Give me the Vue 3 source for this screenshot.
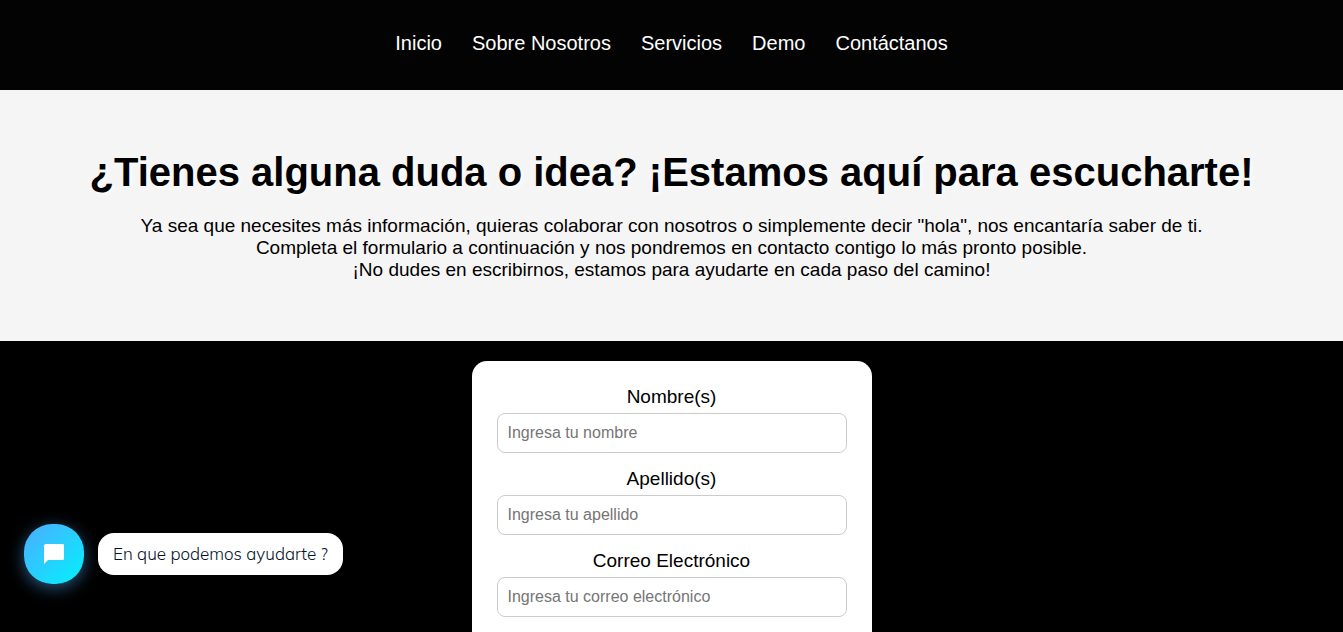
<script setup>
const links = ['Inicio', 'Sobre Nosotros', 'Servicios', 'Demo', 'Contáctanos']
const fields = [
  { id: 'nombre', label: 'Nombre(s)', type: 'text', placeholder: 'Ingresa tu nombre' },
  { id: 'apellido', label: 'Apellido(s)', type: 'text', placeholder: 'Ingresa tu apellido' },
  { id: 'correo', label: 'Correo Electrónico', type: 'email', placeholder: 'Ingresa tu correo electrónico' },
]
</script>

<template>
  <div class="page">
    <nav class="nav">
      <a v-for="link in links" :key="link" href="#">{{ link }}</a>
    </nav>
    <header class="intro">
      <h1>¿Tienes alguna duda o idea? ¡Estamos aquí para escucharte!</h1>
      <p>
        Ya sea que necesites más información, quieras colaborar con nosotros o simplemente decir "hola", nos encantaría saber de ti.<br />
        Completa el formulario a continuación y nos pondremos en contacto contigo lo más pronto posible.<br />
        ¡No dudes en escribirnos, estamos para ayudarte en cada paso del camino!
      </p>
    </header>
    <main class="contact">
      <form class="card" @submit.prevent>
        <div v-for="field in fields" :key="field.id" class="field">
          <label :for="field.id">{{ field.label }}</label>
          <input :id="field.id" :type="field.type" :placeholder="field.placeholder" />
        </div>
      </form>
    </main>
    <div class="chat">
      <button class="chat-button" type="button" aria-label="Abrir chat">
        <svg viewBox="0 0 24 24" width="24" height="24" aria-hidden="true">
          <path fill="#fff" d="M4 2h16.500c.8 0 1.500.7 1.500 1.500v13c0 .8-.7 1.500-1.500 1.500H6l-4 4V4c0-1.100.9-2 2-2z" />
        </svg>
      </button>
      <div class="chat-message">En que podemos ayudarte ?</div>
    </div>
  </div>
</template>

<style>
body {
  background: #000;
}
</style>

<style scoped>
.page {
  height: 100vh;
  overflow: hidden;
  background: #000;
  color: #000;
  font-family: "Liberation Sans", Arial, sans-serif;
  text-align: center;
}
.nav {
  display: flex;
  justify-content: center;
  gap: 30px;
  padding: 31px 20px 35px;
  background: #030303;
  line-height: 24px;
  font-size: 20px;
}
.nav a {
  color: #fff;
  text-decoration: none;
}
.intro {
  padding: 60px 20px;
  background: #f5f5f5;
}
.intro h1 {
  margin: 0 0 20px;
  font-size: 40px;
  line-height: 45px;
  text-shadow: 2px 2px 4px rgba(255, 255, 255, 0.8);
}
.intro p {
  margin: 0;
  font-size: 19px;
  line-height: 22px;
}
.contact {
  padding: 20px;
}
.card {
  box-sizing: border-box;
  max-width: 400px;
  margin: 0 auto;
  padding: 25px;
  border-radius: 15px;
  background: #fff;
}
.field {
  margin-bottom: 15px;
}
.field label {
  display: block;
  margin-bottom: 5px;
  font-size: 19px;
  line-height: 22px;
}
.field input {
  display: block;
  box-sizing: border-box;
  width: 100%;
  height: 40px;
  padding: 10px;
  border: 1px solid #ccc;
  border-radius: 8px;
  background: #fff;
  font-family: inherit;
  font-size: 16px;
}
.chat {
  position: fixed;
  bottom: 48px;
  left: 24px;
  display: flex;
  align-items: center;
  gap: 14px;
}
.chat-button {
  display: flex;
  align-items: center;
  justify-content: center;
  width: 60px;
  height: 60px;
  padding: 0;
  border: 0;
  border-radius: 28px;
  background: linear-gradient(135deg, #4facfe, #00f2fe);
  box-shadow: 0 4px 16px rgba(79, 172, 254, 0.5);
}
.chat-message {
  padding: 10px 15px;
  border-radius: 16px;
  background: #fff;
  color: #06132b;
  font-family: Mulish, Lato, sans-serif;
  font-size: 17px;
  font-weight: 300;
  line-height: 22px;
}
</style>
